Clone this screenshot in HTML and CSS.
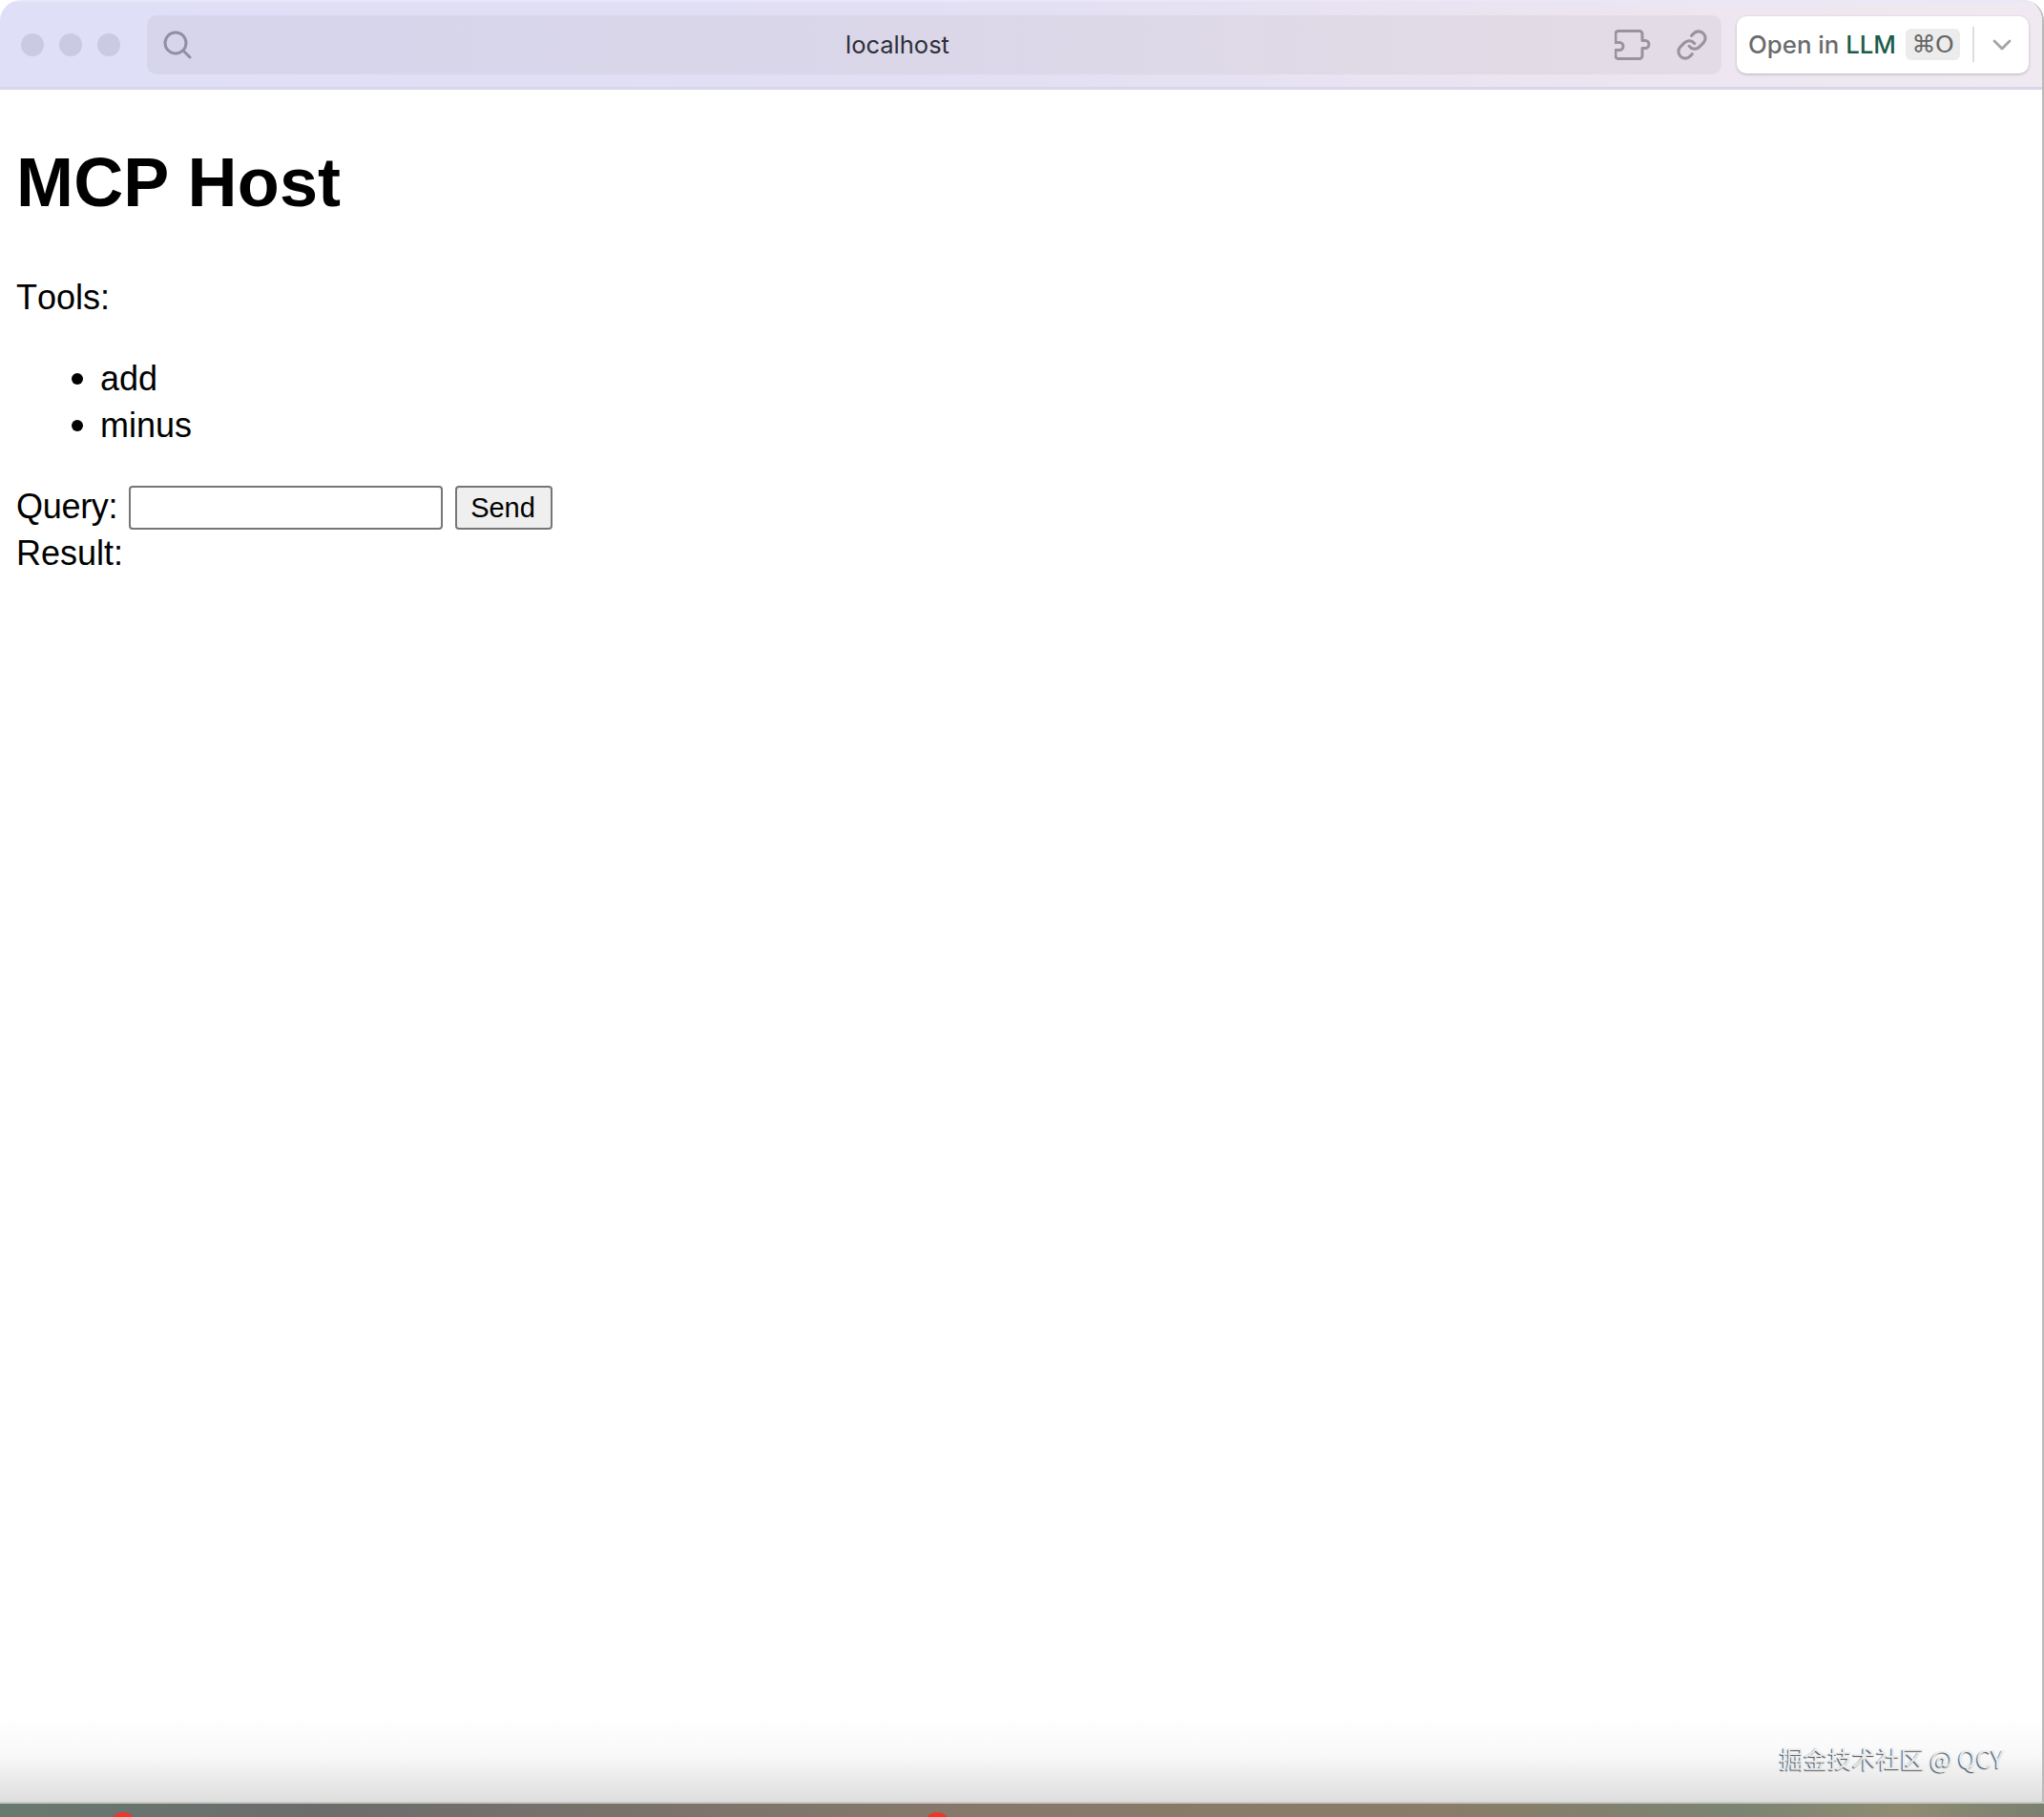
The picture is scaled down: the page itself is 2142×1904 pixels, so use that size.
FILE: index.html
```html
<!DOCTYPE html>
<html lang="en">
<head>
<meta charset="utf-8">
<title>MCP Host</title>
<link rel="stylesheet" href="styles.css">
</head>
<body>
<div class="screen">
  <div class="window">
    <header class="toolbar">
      <div class="lights"><span class="light"></span><span class="light"></span><span class="light"></span></div>
      <div class="urlbar">
        <svg class="icon-search" viewBox="0 0 30 30" fill="none" stroke-width="3"><circle cx="13" cy="13" r="11"/><path d="M21 21 28 28" stroke-linecap="round"/></svg>
        <span class="url">localhost</span>
        <div class="url-actions">
          <svg class="icon-puzzle" viewBox="0 0 40 32" fill="none" stroke-width="3" stroke-linejoin="round"><path d="M4 1.500H26a3 3 0 0 1 3 3v7h3a4 4 0 1 1 0 8H29v8a3 3 0 0 1-3 3H4a3 3 0 0 1-3-3v-6h4a4 4 0 1 0 0-8H1V4.500a3 3 0 0 1 3-3z"/></svg>
          <svg class="icon-link" viewBox="0 0 24 24" fill="none" stroke-width="2.200" stroke-linecap="round" stroke-linejoin="round"><path d="M10 13a5 5 0 0 0 7.540.540l3-3a5 5 0 0 0-7.070-7.070l-1.720 1.710"/><path d="M14 11a5 5 0 0 0-7.540-.540l-3 3a5 5 0 0 0 7.070 7.070l1.710-1.710"/></svg>
        </div>
      </div>
      <div class="open-btn">
        <span class="open-label">Open in <b class="llm">LLM</b></span>
        <span class="kbd">⌘O</span>
        <span class="divider"></span>
        <svg class="icon-chevron" viewBox="0 0 20 12" fill="none" stroke-width="2.800" stroke-linecap="round" stroke-linejoin="round"><path d="M2 2l8 8 8-8"/></svg>
      </div>
    </header>
    <main class="content">
      <h1 class="title">MCP Host</h1>
      <p class="para">Tools:</p>
      <ul class="tools">
        <li class="tool">add</li>
        <li class="tool">minus</li>
      </ul>
      <div class="query-row"><span class="query-label">Query:</span><input class="query-input" type="text"><button class="send" type="button">Send</button></div>
      <div class="result-row">Result:</div>
    </main>
    <div class="fade"></div>
    <div class="watermark">掘金技术社区 @ QCY</div>
    <span class="edge-green"></span>
    <span class="edge-dark"></span>
  </div>
  <div class="desktop">
    <span class="red-dot red-a"></span>
    <span class="red-dot red-b"></span>
  </div>
</div>
</body>
</html>
```
FILE: styles.css
```css
html, body {
  margin: 0;
  padding: 0;
  background: #fff;
}
.screen {
  width: 2142px;
  height: 1904px;
  display: flex;
  flex-direction: column;
  overflow: hidden;
  font-family: "Liberation Sans", Arial, sans-serif;
  color: #000;
}
.window {
  position: relative;
  flex: 1;
  display: flex;
  flex-direction: column;
  background: #fff;
  border-right: 2px solid #b9b9b9;
  border-radius: 22px 22px 0 0;
  overflow: hidden;
}
.toolbar {
  height: 94px;
  box-sizing: border-box;
  display: flex;
  align-items: center;
  padding: 0 14px 0 22px;
  background: linear-gradient(90deg, #dfdff8 0%, #e2dff4 45%, #eee6f0 85%, #f1e9f1 100%);
  border-top: 2px solid #e9e7f8;
  border-bottom: 3px solid #d8d6ea;
  flex: none;
}
.lights {
  display: flex;
  gap: 16px;
  width: 132px;
  flex: none;
}
.light {
  width: 24px;
  height: 24px;
  border-radius: 50%;
  background: #cbcae3;
}
.urlbar {
  width: 1650px;
  height: 62px;
  box-sizing: border-box;
  flex: none;
  display: flex;
  align-items: center;
  padding: 0 14px 0 17px;
  border-radius: 10px;
  background: linear-gradient(90deg, #d6d5ec 0%, #dbd7e9 50%, #e4dce5 100%);
}
.icon-search {
  width: 30px;
  height: 30px;
  stroke: #908fa8;
  flex: none;
}
.url {
  flex: 1;
  padding-right: 12px;
  text-align: center;
  font-family: Inter, "Liberation Sans", sans-serif;
  font-size: 25.500px;
  color: #2f2f38;
}
.url-actions {
  display: flex;
  align-items: center;
  gap: 24px;
  flex: none;
}
.icon-puzzle {
  width: 40px;
  height: 32px;
  stroke: #98939f;
}
.icon-link {
  width: 34px;
  height: 34px;
  stroke: #98939f;
}
.open-btn {
  margin-left: 16px;
  width: 306px;
  height: 60px;
  box-sizing: border-box;
  flex: none;
  display: flex;
  align-items: center;
  padding-left: 12px;
  background: #fff;
  border-radius: 10px;
  box-shadow: 0 1px 3px rgba(60, 50, 70, .3);
  font-family: Inter, "Liberation Sans", sans-serif;
  font-size: 25.800px;
  font-weight: 500;
  color: #6b6b6b;
  white-space: nowrap;
}
.llm {
  font-weight: 500;
  color: #1c5c48;
}
.kbd {
  margin-left: 10px;
  width: 57px;
  height: 33px;
  line-height: 33px;
  text-align: center;
  border-radius: 6px;
  background: #ececec;
  font-family: "DejaVu Sans", Inter, sans-serif;
  font-size: 25px;
  letter-spacing: -.5px;
  color: #666;
}
.divider {
  margin-left: 13px;
  width: 2px;
  height: 37px;
  background: #dedede;
}
.icon-chevron {
  margin-left: 19px;
  width: 20px;
  height: 12px;
  stroke: #a4a4a4;
}
.content {
  padding: 0 17px;
  font-size: 36px;
  line-height: 49px;
}
.title {
  margin: 56px 0 54px;
  font-size: 72px;
  line-height: 83px;
  font-weight: 700;
  letter-spacing: .2px;
}
.para {
  margin: 0 0 36px;
  font-kerning: none;
}
.tools {
  margin: 0 0 36px;
  padding: 0 0 0 88px;
  list-style: none;
}
.tool {
  position: relative;
}
.tool::before {
  content: "";
  position: absolute;
  left: -30px;
  top: 19px;
  width: 12px;
  height: 12px;
  border-radius: 50%;
  background: #000;
}
.query-row {
  height: 49px;
  display: flex;
  align-items: flex-end;
}
.query-label {
  align-self: flex-start;
  width: 118px;
  letter-spacing: -.3px;
}
.query-input {
  width: 329px;
  height: 46px;
  box-sizing: border-box;
  padding: 0 4px;
  border: 2px solid #767676;
  border-radius: 4px;
  background: #fff;
}
.send {
  width: 102px;
  height: 46px;
  margin-left: 13px;
  box-sizing: border-box;
  padding: 0 2px 0 0;
  border: 2px solid #767676;
  border-radius: 4px;
  background: #efefef;
  font-family: "Liberation Sans", Arial, sans-serif;
  font-size: 29px;
  color: #000;
}
.fade {
  position: absolute;
  left: 0;
  right: 0;
  bottom: 0;
  height: 90px;
  background: linear-gradient(180deg, rgba(222, 222, 222, 0) 0%, rgba(222, 222, 222, .2) 45%, #dedede 100%);
}
.watermark {
  position: absolute;
  right: 40px;
  bottom: 27px;
  font-family: "Noto Sans CJK SC", "Liberation Sans", sans-serif;
  font-size: 25.300px;
  line-height: 38px;
  color: #ececec;
  text-shadow: -1px 1px 1px #4a4a4a;
}
.edge-green {
  position: absolute;
  right: -2px;
  top: 745px;
  width: 2px;
  height: 73px;
  background: #6cae4a;
}
.edge-dark {
  position: absolute;
  right: -2px;
  top: 768px;
  width: 2px;
  height: 27px;
  background: #12300c;
}
.desktop {
  position: relative;
  height: 16px;
  flex: none;
  overflow: hidden;
  background: linear-gradient(90deg, #687a70 0%, #6c6c6c 15%, #85786a 45%, #8a7c68 70%, #7b8472 85%, #8f8c72 93%, #7a8070 100%);
  border-top: 2px solid #c8c8c4;
  box-sizing: border-box;
}
.red-dot {
  position: absolute;
  top: 9px;
  width: 28px;
  height: 28px;
  border-radius: 50%;
  background: #f0352a;
}
.red-a {
  left: 115px;
}
.red-b {
  left: 968px;
}
```
